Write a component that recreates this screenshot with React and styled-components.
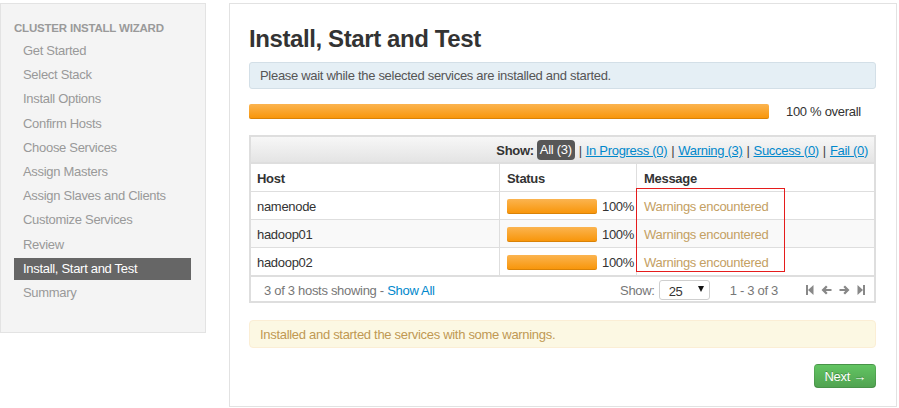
import React from "react";
import styled, { createGlobalStyle } from "styled-components";

const GlobalStyle = createGlobalStyle`
  html, body { margin: 0; padding: 0; background: #fff; }
  body {
    font-family: "Liberation Sans", Arial, sans-serif;
    font-size: 13px;
    color: #333;
    letter-spacing: -0.3px;
  }
  * { box-sizing: border-box; }
`;

const Page = styled.div`
  display: flex;
  align-items: flex-start;
  gap: 23px;
  padding-top: 3px;
`;

const Sidebar = styled.nav`
  width: 206px;
  background: #f4f4f4;
  border: 1px solid #e3e3e3;
  padding: 14px 14px 28px 13px;
`;

const NavHeader = styled.div`
  font-size: 11.5px;
  font-weight: bold;
  line-height: 20px;
  color: #9a9a9a;
  text-transform: uppercase;
  letter-spacing: -0.2px;
`;

const NavItem = styled.div`
  height: 22px;
  line-height: 22px;
  padding-left: 9px;
  margin-top: ${(p) => (p.$first ? "2px" : "2.2px")};
  color: ${(p) => (p.$active ? "#fff" : "#999")};
  background: ${(p) => (p.$active ? "#666" : "transparent")};
`;

const Main = styled.main`
  width: 668px;
  height: 404px;
  border: 1px solid #e2e2e2;
  padding: 17px 20px 0 19px;
`;

const Title = styled.h2`
  margin: 0 0 5px;
  font-size: 24px;
  line-height: 36px;
  font-weight: bold;
  color: #333;
  letter-spacing: -0.4px;
`;

const InfoBox = styled.div`
  background: #e5eff5;
  border: 1px solid #d3dfe7;
  border-radius: 3px;
  padding: 4px 10px;
  line-height: 17px;
  color: #555;
`;

const ProgressRow = styled.div`
  display: flex;
  align-items: center;
  margin-top: 15px;
  height: 15px;
`;

const Bar = styled.div`
  width: ${(p) => p.$w}px;
  height: 15px;
  border-radius: 2px;
  background: linear-gradient(#fbb450, #f89406);
  box-shadow: inset 0 -1px 0 rgba(0, 0, 0, 0.12);
  flex: none;
`;

const OverallText = styled.span`
  margin-left: 17px;
  color: #333;
`;

const TableBox = styled.div`
  position: relative;
  margin-top: 16px;
  border: 2px solid #dedede;
`;

const Toolbar = styled.div`
  height: 27px;
  display: flex;
  align-items: center;
  justify-content: flex-end;
  padding: 1px 6px 0 0;
  background: linear-gradient(#f7f7f7, #e4e4e4);
  border-bottom: 2px solid #dedede;
  color: #333;
`;

const ShowLabel = styled.b`
  margin-right: 3px;
`;

const Badge = styled.span`
  background: #575757;
  color: #fff;
  border-radius: 4px;
  height: 20px;
  line-height: 20px;
  padding: 0 3px;
`;

const Sep = styled.span`
  margin: 0 4px;
  color: #444;
`;

const Link = styled.a`
  color: #0088cc;
  text-decoration: ${(p) => (p.$plain ? "none" : "underline")};
  cursor: pointer;
`;

const Row = styled.div`
  display: grid;
  grid-template-columns: 248px 137px 1fr;
  height: 28px;
  border-bottom: 1px solid #dedede;
  background: ${(p) => (p.$striped ? "#f9f9f9" : "#fff")};
  font-weight: ${(p) => (p.$head ? "bold" : "normal")};
`;

const Cell = styled.div`
  display: flex;
  align-items: center;
  padding-left: ${(p) => (p.$first ? "6px" : "7px")};
  padding-top: 1px;
  border-left: ${(p) => (p.$first ? "none" : "1px solid #dedede")};
  color: ${(p) => (p.$warn ? "#c4a063" : "#333")};
`;

const Pct = styled.span`
  margin-left: 5px;
  color: #333;
`;

const Footer = styled.div`
  height: 25px;
  display: flex;
  align-items: center;
  border-top: 1px solid #dedede;
  padding: 2px 9px 0 13px;
  color: #777;
`;

const FooterLeft = styled.div`
  flex: 1;
`;

const FooterRight = styled.div`
  display: flex;
  align-items: center;
`;

const FakeSelect = styled.div`
  position: relative;
  width: 51px;
  height: 20px;
  margin-left: 4px;
  border: 1px solid #cfcfcf;
  border-radius: 3px;
  background: #fff;
  color: #333;
  padding: 3px 0 0 9px;
  line-height: 16px;
  &::after {
    content: "";
    position: absolute;
    right: 5px;
    top: 5px;
    border-left: 3.5px solid transparent;
    border-right: 3.5px solid transparent;
    border-top: 6px solid #111;
  }
`;

const PageInfo = styled.span`
  margin-left: 20px;
`;

const PagerIcons = styled.div`
  display: flex;
  align-items: center;
  gap: 7px;
  margin-left: 28px;
`;

const Annotation = styled.div`
  position: absolute;
  left: 385px;
  top: 51px;
  width: 149px;
  height: 84px;
  border: 1px solid #e51c1c;
  pointer-events: none;
`;

const WarnBox = styled.div`
  margin-top: 17px;
  background: #fcf8e3;
  border: 1px solid #fbeed5;
  border-radius: 4px;
  padding: 6px 10px 4px;
  line-height: 16px;
  color: #c09853;
`;

const Actions = styled.div`
  display: flex;
  justify-content: flex-end;
  margin-top: 16px;
`;

const NextButton = styled.button`
  height: 24px;
  padding: 0 9px;
  border: 1px solid #4a9b4a;
  border-color: rgba(0, 0, 0, 0.1) rgba(0, 0, 0, 0.1) rgba(0, 0, 0, 0.25);
  border-radius: 4px;
  background: linear-gradient(#62c462, #51a351);
  color: #fff;
  font-family: inherit;
  font-size: 13px;
  letter-spacing: -0.3px;
  text-shadow: 0 -1px 0 rgba(0, 0, 0, 0.25);
  cursor: pointer;
`;

const Icon = ({ children, w = 10 }) => (
  <svg width={w} height="10" viewBox={`0 0 ${w} 10`} fill="#888">
    {children}
  </svg>
);

const steps = [
  "Get Started",
  "Select Stack",
  "Install Options",
  "Confirm Hosts",
  "Choose Services",
  "Assign Masters",
  "Assign Slaves and Clients",
  "Customize Services",
  "Review",
  "Install, Start and Test",
  "Summary",
];

const hosts = ["namenode", "hadoop01", "hadoop02"];

export default function App() {
  return (
    <>
      <GlobalStyle />
      <Page>
        <Sidebar>
          <NavHeader>Cluster Install Wizard</NavHeader>
          {steps.map((s, i) => (
            <NavItem key={s} $first={i === 0} $active={s === "Install, Start and Test"}>
              {s}
            </NavItem>
          ))}
        </Sidebar>
        <Main>
          <Title>Install, Start and Test</Title>
          <InfoBox>Please wait while the selected services are installed and started.</InfoBox>
          <ProgressRow>
            <Bar $w={520} />
            <OverallText>100 % overall</OverallText>
          </ProgressRow>
          <TableBox>
            <Toolbar>
              <ShowLabel>Show:</ShowLabel>
              <Badge>All (3)</Badge>
              <Sep>|</Sep>
              <Link>In Progress (0)</Link>
              <Sep>|</Sep>
              <Link>Warning (3)</Link>
              <Sep>|</Sep>
              <Link>Success (0)</Link>
              <Sep>|</Sep>
              <Link>Fail (0)</Link>
            </Toolbar>
            <Row $head>
              <Cell $first>Host</Cell>
              <Cell>Status</Cell>
              <Cell>Message</Cell>
            </Row>
            {hosts.map((h, i) => (
              <Row key={h} $striped={i === 1}>
                <Cell $first>{h}</Cell>
                <Cell>
                  <Bar $w={90} />
                  <Pct>100%</Pct>
                </Cell>
                <Cell $warn>Warnings encountered</Cell>
              </Row>
            ))}
            <Footer>
              <FooterLeft>
                3 of 3 hosts showing - <Link $plain>Show All</Link>
              </FooterLeft>
              <FooterRight>
                <span>Show:</span>
                <FakeSelect>25</FakeSelect>
                <PageInfo>1 - 3 of 3</PageInfo>
                <PagerIcons>
                  <Icon w={8}>
                    <rect x="0" y="0" width="2" height="10" />
                    <path d="M2 5 L7.5 0 V10 Z" />
                  </Icon>
                  <Icon w={11}>
                    <path d="M5 0.5 L0.5 5 L5 9.5 L6.6 7.9 L4.8 6.1 H10.5 V3.9 H4.8 L6.6 2.1 Z" />
                  </Icon>
                  <Icon w={11}>
                    <path d="M6 0.5 L10.5 5 L6 9.5 L4.4 7.9 L6.2 6.1 H0.5 V3.9 H6.2 L4.4 2.1 Z" />
                  </Icon>
                  <Icon w={8}>
                    <path d="M0.5 0 L6 5 L0.5 10 Z" />
                    <rect x="6" y="0" width="2" height="10" />
                  </Icon>
                </PagerIcons>
              </FooterRight>
            </Footer>
            <Annotation />
          </TableBox>
          <WarnBox>Installed and started the services with some warnings.</WarnBox>
          <Actions>
            <NextButton>Next →</NextButton>
          </Actions>
        </Main>
      </Page>
    </>
  );
}
